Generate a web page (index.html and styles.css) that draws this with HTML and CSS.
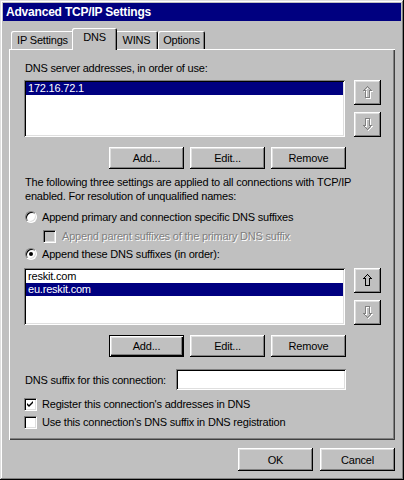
FILE: index.html
```html
<!DOCTYPE html>
<html>
<head>
<meta charset="utf-8">
<title>Advanced TCP/IP Settings</title>
<link rel="stylesheet" href="styles.css">
</head>
<body>
<div class="window">
  <div class="titlebar">Advanced TCP/IP Settings</div>
  <div class="content">
    <div class="tabs">
      <div class="tab w-ip">IP Settings</div>
      <div class="tab active w-dns">DNS</div>
      <div class="tab w-wins">WINS</div>
      <div class="tab w-opt">Options</div>
    </div>
    <div class="panel">
      <div class="label">DNS server addresses, in order of use:</div>
      <div class="listrow">
        <div class="listbox">
          <div class="item sel">172.16.72.1</div>
        </div>
        <div class="arrows">
          <button class="btn arrow" disabled>
            <svg width="10" height="13" viewBox="0 0 10 13"><path class="shade" d="M5.5 1.5 L1.5 5.5 H3.5 V12.5 H7.5 V5.5 H9.5 Z"/><path class="gray" d="M4.5 0.5 L0.5 4.5 H2.5 V11.5 H6.5 V4.5 H8.5 Z"/></svg>
          </button>
          <button class="btn arrow" disabled>
            <svg width="10" height="13" viewBox="0 0 10 13"><path class="shade" d="M5.5 12.5 L1.5 8.5 H3.5 V1.5 H7.5 V8.5 H9.5 Z"/><path class="gray" d="M4.5 11.5 L0.5 7.5 H2.5 V0.5 H6.5 V7.5 H8.5 Z"/></svg>
          </button>
        </div>
      </div>
      <div class="btnrow">
        <button class="btn">Add...</button>
        <button class="btn">Edit...</button>
        <button class="btn">Remove</button>
      </div>
      <p class="para">The following three settings are applied to all connections with TCP/IP enabled. For resolution of unqualified names:</p>
      <div class="opt first">
        <span class="radio"></span><span>Append primary and connection specific DNS suffixes</span>
      </div>
      <div class="opt sub">
        <span class="check disabled"></span><span class="dis">Append parent suffixes of the primary DNS suffix</span>
      </div>
      <div class="opt">
        <span class="radio on"></span><span>Append these DNS suffixes (in order):</span>
      </div>
      <div class="listrow second">
        <div class="listbox">
          <div class="item">reskit.com</div>
          <div class="item sel">eu.reskit.com</div>
        </div>
        <div class="arrows">
          <button class="btn arrow">
            <svg width="10" height="13" viewBox="0 0 10 13"><path class="black" d="M4.5 0.5 L0.5 4.5 H2.5 V11.5 H6.5 V4.5 H8.5 Z"/></svg>
          </button>
          <button class="btn arrow" disabled>
            <svg width="10" height="13" viewBox="0 0 10 13"><path class="shade" d="M5.5 12.5 L1.5 8.5 H3.5 V1.5 H7.5 V8.5 H9.5 Z"/><path class="gray" d="M4.5 11.5 L0.5 7.5 H2.5 V0.5 H6.5 V7.5 H8.5 Z"/></svg>
          </button>
        </div>
      </div>
      <div class="btnrow">
        <button class="btn default">Add...</button>
        <button class="btn">Edit...</button>
        <button class="btn">Remove</button>
      </div>
      <div class="suffixrow">
        <span class="suffixlabel">DNS suffix for this connection:</span>
        <span class="textbox"></span>
      </div>
      <div class="opt reg">
        <span class="check"><svg width="7" height="7" viewBox="0 0 7 7"><path d="M0 2 L2 4 L6 0 V2 L2 6 L0 4 Z" fill="#000"/></svg></span><span>Register this connection's addresses in DNS</span>
      </div>
      <div class="opt">
        <span class="check"></span><span>Use this connection's DNS suffix in DNS registration</span>
      </div>
    </div>
    <div class="footer">
      <button class="btn">OK</button>
      <button class="btn">Cancel</button>
    </div>
  </div>
</div>
</body>
</html>
```
FILE: styles.css
```css
html, body {
  margin: 0;
  padding: 0;
}
body {
  width: 404px;
  height: 480px;
  background: #c0c0c0;
  font-family: "Liberation Sans", Arial, sans-serif;
  font-size: 11px;
  letter-spacing: -0.2px;
  color: #000;
}
.window {
  box-sizing: border-box;
  width: 404px;
  height: 480px;
  padding: 3px;
  background: #c0c0c0;
  box-shadow: inset -1px -1px #000, inset 1px 1px #dfdfdf, inset -2px -2px #808080, inset 2px 2px #fff;
  display: flex;
  flex-direction: column;
}
.titlebar {
  height: 18px;
  line-height: 18px;
  background: #000080;
  color: #fff;
  font-weight: bold;
  font-size: 12px;
  padding-left: 3px;
}
.content {
  flex: 1;
  display: flex;
  flex-direction: column;
  padding: 7px 6px 6px 6px;
}
.tabs {
  display: flex;
  align-items: flex-end;
  height: 21px;
  padding-left: 2px;
}
.tab {
  box-sizing: border-box;
  height: 18px;
  line-height: 18px;
  text-align: center;
  background: #c0c0c0;
  box-shadow: inset 1px 1px #fff, inset -1px 0 #000, inset -2px 0 #808080;
  border-radius: 2px 2px 0 0;
}
.w-ip { width: 63px; }
.w-dns { width: 45px; }
.w-wins { width: 43px; }
.w-opt { width: 47px; }
.tab.active {
  position: relative;
  z-index: 1;
  height: 22px;
  line-height: 18px;
  margin: 0 -2px -1px -2px;
}
.panel {
  flex: 1;
  box-sizing: border-box;
  padding: 13px 13px 0 15px;
  box-shadow: inset 1px 1px #fff, inset -1px -1px #404040, inset -2px -2px #808080;
}
.label {
  line-height: 13px;
  padding-left: 1px;
}
.listrow {
  display: flex;
  margin-top: 5px;
}
.listrow.second {
  margin-top: 5px;
}
.listbox {
  box-sizing: border-box;
  width: 321px;
  height: 57px;
  padding: 2px;
  background: #fff;
  box-shadow: inset 1px 1px #808080, inset -1px -1px #fff, inset 2px 2px #000, inset -2px -2px #dfdfdf;
}
.item {
  height: 13px;
  line-height: 13px;
  padding-left: 2px;
}
.item.sel {
  background: #000080;
  color: #fff;
}
.arrows {
  display: flex;
  flex-direction: column;
  gap: 7px;
  margin-left: 9px;
}
.btn {
  box-sizing: border-box;
  width: 75px;
  height: 22px;
  border: none;
  padding: 0;
  margin: 0;
  background: #c0c0c0;
  font-family: "Liberation Sans", Arial, sans-serif;
  font-size: 11px;
  letter-spacing: -0.2px;
  color: #000;
  box-shadow: inset -1px -1px #000, inset 1px 1px #fff, inset -2px -2px #808080, inset 2px 2px #dfdfdf;
}
.btn.default {
  box-shadow: inset 0 0 0 1px #000, inset 2px 2px #fff, inset -2px -2px #000, inset -3px -3px #808080, inset 3px 3px #dfdfdf;
}
.btn.arrow {
  width: 27px;
  height: 25px;
  display: flex;
  align-items: center;
  justify-content: center;
}
.btn svg {
  display: block;
  shape-rendering: crispEdges;
}
.btn svg path {
  fill: none;
  stroke-width: 1;
}
.btn svg .black { stroke: #000; }
.btn svg .gray { stroke: #808080; }
.btn svg .shade { stroke: #fff; }
.btnrow {
  display: flex;
  justify-content: flex-end;
  gap: 6px;
  margin-top: 10px;
  padding-right: 36px;
}
.para {
  margin: 6px 0 0 0;
  line-height: 14px;
  padding-left: 1px;
  width: 345px;
}
.opt {
  display: flex;
  align-items: center;
  height: 18px;
}
.opt.first { margin-top: 5px; }
.opt.sub { margin-top: 1px; padding-left: 19px; }
.opt.reg { margin-top: 5px; }
.radio {
  box-sizing: border-box;
  position: relative;
  width: 12px;
  height: 12px;
  margin-left: 1px;
  margin-right: 5px;
  border-radius: 50%;
  background: #fff;
  border: 1px solid;
  border-color: #808080 #fff #fff #808080;
  box-shadow: inset 1px 1px #000, inset -1px -1px #dfdfdf;
  flex: none;
}
.radio.on::after {
  content: "";
  position: absolute;
  left: 3px;
  top: 3px;
  width: 4px;
  height: 4px;
  border-radius: 50%;
  background: #000;
}
.check {
  box-sizing: border-box;
  width: 13px;
  height: 13px;
  margin-right: 5px;
  background: #fff;
  border: 1px solid;
  border-color: #808080 #fff #fff #808080;
  box-shadow: inset 1px 1px #000, inset -1px -1px #dfdfdf;
  display: flex;
  align-items: center;
  justify-content: center;
  flex: none;
}
.check.disabled {
  background: #c0c0c0;
  margin-right: 6px;
}
.dis {
  color: #808080;
  text-shadow: 1px 1px #fff;
}
.suffixrow {
  display: flex;
  align-items: center;
  margin-top: 12px;
}
.suffixlabel {
  width: 151px;
  padding-left: 1px;
}
.textbox {
  box-sizing: border-box;
  width: 170px;
  height: 21px;
  background: #fff;
  box-shadow: inset 1px 1px #808080, inset -1px -1px #fff, inset 2px 2px #000, inset -2px -2px #dfdfdf;
}
.footer {
  display: flex;
  justify-content: flex-end;
  gap: 7px;
  margin-top: 8px;
}
.footer .btn {
  height: 23px;
}
```
